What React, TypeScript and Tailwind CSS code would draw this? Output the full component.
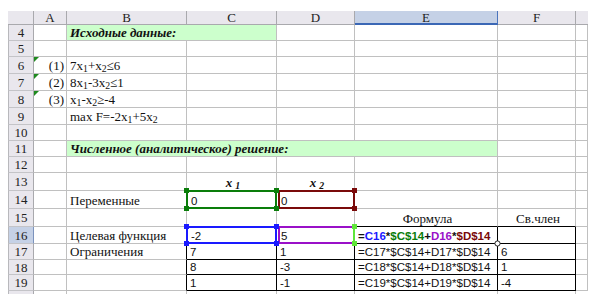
import React from 'react';

const serif = "font-['Liberation_Serif',serif] text-[13px] leading-[15px] text-[#111]";
const sans = "font-['Liberation_Sans',sans-serif] text-[11.5px] leading-[14px] text-[#111]";

type CellProps = {
  children?: React.ReactNode;
  className?: string;
  rb?: boolean; // black right border
  bb?: boolean; // black bottom border
};

function Cell({ children, className = '', rb, bb }: CellProps) {
  return (
    <div
      className={`relative flex items-end whitespace-nowrap border-r border-b pl-[3px] ${
        rb ? 'border-r-black' : 'border-r-[#c0c0c0]'
      } ${bb ? 'border-b-black' : 'border-b-[#c0c0c0]'} ${className}`}
    >
      <span>{children}</span>
    </div>
  );
}

function RowHead({ n, active }: { n: number; active?: boolean }) {
  return (
    <div
      className={`flex items-center justify-center border-l border-r border-b border-l-[#b8b8bc] border-b-[#c4c4c8] ${
        active ? 'bg-[#c5d1e6] border-r-[#7c93bd]' : 'bg-[#e9e7ed] border-r-[#a9a9ad]'
      } ${serif} text-[#222]`}
    >
      {n}
    </div>
  );
}

function ColHead({ label, active }: { label?: string; active?: boolean }) {
  return (
    <div
      className={`flex items-center justify-center border-r ${
        active
          ? 'bg-[#c5d1e6] border-r-[#4a74bd] border-b-2 border-b-[#3b67b5]'
          : 'bg-[#e9e7ed] border-r-[#a9a9ad] border-b border-b-[#a9a9ad]'
      } ${serif} text-[#222]`}
    >
      {label}
    </div>
  );
}

// green "number stored as text" marker
function Marker() {
  return <span className="absolute left-0 top-0 h-0 w-0 border-t-[5px] border-r-[5px] border-t-[#1e8a1e] border-r-transparent" />;
}

function Sq({ pos, color }: { pos: string; color: string }) {
  return <span className={`absolute z-20 size-[5px] ${pos} ${color}`} />;
}

function Sub({ children }: { children: React.ReactNode }) {
  return <sub>{children}</sub>;
}

function Rest({ from }: { from: 'A' | 'C' }) {
  // trailing empty cells of a plain row
  const cells = from === 'A' ? 7 : 5;
  return (
    <>
      {Array.from({ length: cells }).map((_, i) => (
        <Cell key={i} />
      ))}
    </>
  );
}

export default function App() {
  return (
    <div className="h-[307px] w-[609px] bg-white pl-[8px] pt-[11px]">
      <div className="grid grid-cols-[26px_33px_120px_90px_78px_143px_78px_12px] grid-rows-[14px_16px_16px_17px_17px_17px_17px_16px_16px_16px_18px_18px_18px_17px_16px_15px_16px_3px]">
        {/* column headers */}
        <div className="border-r border-b border-r-[#a9a9ad] border-b-[#a9a9ad] bg-[#e9e7ed]" />
        <ColHead label="A" />
        <ColHead label="B" />
        <ColHead label="C" />
        <ColHead label="D" />
        <ColHead label="E" active />
        <ColHead label="F" />
        <div className="border-b border-b-[#a9a9ad] bg-[#e9e7ed]" />

        {/* 4 */}
        <RowHead n={4} />
        <Cell />
        <Cell className={`col-span-2 bg-[#ccffcc] ${serif} font-bold italic`}>Исходные данные:</Cell>
        <Cell />
        <Cell />
        <Cell />
        <Cell />

        {/* 5 */}
        <RowHead n={5} />
        <Rest from="A" />

        {/* 6 */}
        <RowHead n={6} />
        <Cell className={`justify-end pr-[2px] ${serif}`}>
          <Marker />
          (1)
        </Cell>
        <Cell className={serif}>
          7x<Sub>1</Sub>+x<Sub>2</Sub>≤6
        </Cell>
        <Rest from="C" />

        {/* 7 */}
        <RowHead n={7} />
        <Cell className={`justify-end pr-[2px] ${serif}`}>
          <Marker />
          (2)
        </Cell>
        <Cell className={serif}>
          8x<Sub>1</Sub>-3x<Sub>2</Sub>≤1
        </Cell>
        <Rest from="C" />

        {/* 8 */}
        <RowHead n={8} />
        <Cell className={`justify-end pr-[2px] ${serif}`}>
          <Marker />
          (3)
        </Cell>
        <Cell className={serif}>
          x<Sub>1</Sub>-x<Sub>2</Sub>≥-4
        </Cell>
        <Rest from="C" />

        {/* 9 */}
        <RowHead n={9} />
        <Cell />
        <Cell className={serif}>
          max F=-2x<Sub>1</Sub>+5x<Sub>2</Sub>
        </Cell>
        <Rest from="C" />

        {/* 10 */}
        <RowHead n={10} />
        <Rest from="A" />

        {/* 11 */}
        <RowHead n={11} />
        <Cell />
        <Cell className={`col-span-4 bg-[#ccffcc] ${serif} font-bold italic`}>Численное (аналитическое) решение:</Cell>
        <Cell />
        <Cell />

        {/* 12 */}
        <RowHead n={12} />
        <Rest from="A" />

        {/* 13 */}
        <RowHead n={13} />
        <Cell />
        <Cell />
        <Cell bb className={`justify-center ${serif} font-bold italic`}>
          x<span className="ml-[3px]"><Sub>1</Sub></span>
        </Cell>
        <Cell bb className={`justify-center ${serif} font-bold italic`}>
          x<span className="ml-[3px]"><Sub>2</Sub></span>
        </Cell>
        <Cell />
        <Cell />
        <Cell />

        {/* 14 */}
        <RowHead n={14} />
        <Cell />
        <Cell rb className={serif}>Переменные</Cell>
        <Cell rb bb className={`${sans} pl-[4px]`}>
          <span className="absolute -left-px -top-px -right-px -bottom-px z-10 border-2 border-[#0a7d0a]" />
          <Sq pos="-left-[3px] -top-[3px]" color="bg-[#0a7d0a]" />
          <Sq pos="-left-[3px] -bottom-[3px]" color="bg-[#0a7d0a]" />
          <Sq pos="-right-[3px] -top-[3px]" color="bg-[#0a7d0a]" />
          <Sq pos="-right-[3px] -bottom-[3px]" color="bg-[#0a7d0a]" />
          <span className="relative z-30">0</span>
        </Cell>
        <Cell rb bb className={`${sans} pl-[4px]`}>
          <span className="absolute left-[1px] -top-px -right-px -bottom-px z-10 border-2 border-[#7a0a0a]" />
          <Sq pos="-right-[3px] -top-[3px]" color="bg-[#7a0a0a]" />
          <Sq pos="-right-[3px] -bottom-[3px]" color="bg-[#7a0a0a]" />
          <span className="relative z-30">0</span>
        </Cell>
        <Cell />
        <Cell />
        <Cell />

        {/* 15 */}
        <RowHead n={15} />
        <Cell />
        <Cell />
        <Cell />
        <Cell />
        <Cell bb className={`justify-center pl-0 ${serif}`}>Формула</Cell>
        <Cell bb className={`justify-center pl-0 ${serif}`}>Св.член</Cell>
        <Cell />

        {/* 16 */}
        <RowHead n={16} active />
        <Cell />
        <Cell rb className={serif}>Целевая функция</Cell>
        <Cell rb bb className={`${sans} pl-[4px]`}>
          <span className="absolute -left-px -top-px -right-px -bottom-px z-10 border-2 border-[#1a1aff]" />
          <Sq pos="-left-[3px] -top-[3px]" color="bg-[#1a1aff]" />
          <Sq pos="-left-[3px] -bottom-[3px]" color="bg-[#1a1aff]" />
          <Sq pos="-right-[3px] -top-[3px]" color="bg-[#1a1aff]" />
          <Sq pos="-right-[3px] -bottom-[3px]" color="bg-[#1a1aff]" />
          <span className="relative z-30">-2</span>
        </Cell>
        <Cell rb bb className={`${sans} pl-[4px]`}>
          <span className="absolute left-[1px] -top-px -right-px -bottom-px z-10 border-2 border-[#9a10c8] border-r-[#5fe63a]" />
          <Sq pos="-right-[3px] -top-[3px]" color="bg-[#5fe63a]" />
          <Sq pos="-right-[3px] -bottom-[3px]" color="bg-[#5fe63a]" />
          <span className="relative z-30">5</span>
        </Cell>
        <Cell rb bb className={`${sans} font-bold`}>
          <span>=</span>
          <span className="text-[#1a1aff]">C16</span>
          <span>*</span>
          <span className="text-[#0a7d0a]">$C$14</span>
          <span>+</span>
          <span className="text-[#9a10c8]">D16</span>
          <span>*</span>
          <span className="text-[#7a0a0a]">$D$14</span>
          <svg className="absolute -right-[4px] -bottom-[4px] z-30" width="7" height="7" viewBox="0 0 7 7">
            <circle cx="3.5" cy="3.5" r="2.6" fill="white" stroke="#222" strokeWidth="1" />
          </svg>
        </Cell>
        <Cell rb bb />
        <Cell />

        {/* 17-19 */}
        {[
          ['17', 'Ограничения', '7', '1', '6'],
          ['18', '', '8', '-3', '1'],
          ['19', '', '1', '-1', '-4'],
        ].map(([n, label, c, d, f]) => (
          <React.Fragment key={n}>
            <RowHead n={Number(n)} />
            <Cell />
            <Cell rb className={serif}>{label}</Cell>
            <Cell rb bb className={sans}>{c}</Cell>
            <Cell rb bb className={sans}>{d}</Cell>
            <Cell rb bb className={sans}>
              =C{n}*$C$14+D{n}*$D$14
            </Cell>
            <Cell rb bb className={sans}>{f}</Cell>
            <Cell />
          </React.Fragment>
        ))}

        {/* gridline stubs */}
        <div className="border-l border-r border-l-[#b8b8bc] border-r-[#a9a9ad] bg-[#e9e7ed]" />
        <div className="border-r border-r-[#c0c0c0]" />
        <div className="border-r border-r-[#c0c0c0]" />
        <div className="border-r border-r-[#c0c0c0]" />
        <div className="border-r border-r-[#c0c0c0]" />
        <div className="border-r border-r-[#c0c0c0]" />
        <div className="border-r border-r-[#c0c0c0]" />
        <div />
      </div>
    </div>
  );
}
